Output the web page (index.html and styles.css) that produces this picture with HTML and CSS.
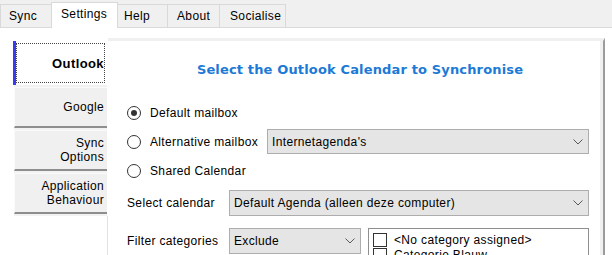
FILE: index.html
```html
<!DOCTYPE html>
<html>
<head>
<meta charset="utf-8">
<link rel="stylesheet" href="styles.css">
</head>
<body>
<div class="window">
  <div class="tabbar">
    <div class="tab tab-sync">Sync</div>
    <div class="tab tab-active tab-settings">Settings</div>
    <div class="tab tab-help">Help</div>
    <div class="tab tab-about">About</div>
    <div class="tab tab-social">Socialise</div>
  </div>
  <div class="main">
    <div class="vtabs">
      <div class="vtab-active"><div class="focus">Outlook</div></div>
      <div class="vtab-group">
        <div class="vtab">Google</div>
        <div class="vtab">Sync<br>Options</div>
        <div class="vtab">Application<br>Behaviour</div>
      </div>
      <div class="vtab-fill"></div>
    </div>
    <div class="panel">
      <div class="title">Select the Outlook Calendar to Synchronise</div>
      <div class="row row-first">
        <span class="radio checked"></span><span class="radio-label">Default mailbox</span>
      </div>
      <div class="row row-next">
        <span class="radio"></span><span class="radio-label radio-label-alt">Alternative mailbox</span>
        <div class="combo combo-grow"><span>Internetagenda's</span><svg class="chev" width="10" height="6" viewBox="0 0 10 6"><path d="M0.5 0.5 L5 5 L9.5 0.5" fill="none" stroke="#5a5a5a" stroke-width="1"/></svg></div>
      </div>
      <div class="row row-next">
        <span class="radio"></span><span class="radio-label">Shared Calendar</span>
      </div>
      <div class="row row-cal">
        <span class="field-label">Select calendar</span>
        <div class="combo combo-grow combo-tall"><span>Default Agenda (alleen deze computer)</span><svg class="chev" width="10" height="6" viewBox="0 0 10 6"><path d="M0.5 0.5 L5 5 L9.5 0.5" fill="none" stroke="#5a5a5a" stroke-width="1"/></svg></div>
      </div>
      <div class="row row-filter">
        <span class="field-label field-label-tall">Filter categories</span>
        <div class="combo combo-small combo-tall"><span>Exclude</span><svg class="chev" width="10" height="6" viewBox="0 0 10 6"><path d="M0.5 0.5 L5 5 L9.5 0.5" fill="none" stroke="#5a5a5a" stroke-width="1"/></svg></div>
        <div class="listbox">
          <div class="list-item"><span class="check"></span>&lt;No category assigned&gt;</div>
          <div class="list-item"><span class="check"></span>Categorie Blauw</div>
        </div>
      </div>
    </div>
  </div>
</div>
</body>
</html>
```
FILE: styles.css
```css
html, body {
  margin: 0;
  padding: 0;
  background: #ffffff;
}
body {
  font-family: "Liberation Sans", Arial, sans-serif;
  font-size: 12px;
  letter-spacing: 0.35px;
  color: #000000;
}
.window {
  width: 612px;
  height: 255px;
  overflow: hidden;
}
.tabbar {
  height: 27px;
  background: #f0f0f0;
  border-bottom: 1px solid #dadada;
  display: flex;
  align-items: flex-end;
}
.tab {
  box-sizing: border-box;
  height: 23px;
  border: 1px solid #d9d9d9;
  border-bottom: none;
  margin-right: -1px;
  display: flex;
  align-items: center;
  background: #f0f0f0;
}
.tab-active {
  position: relative;
  z-index: 1;
  height: 26px;
  margin-bottom: -1px;
  background: #ffffff;
  padding-bottom: 3px;
}
.tab-sync { width: 52px; padding-left: 8px; }
.tab-settings { width: 67px; padding-left: 9px; }
.tab-help { width: 51px; padding-left: 6px; }
.tab-about { width: 53px; padding-left: 9px; }
.tab-social { width: 67px; padding-left: 10px; }

.main {
  display: flex;
  height: 227px;
  box-sizing: border-box;
  padding: 10px 7px 0 12px;
}
.vtabs {
  width: 96px;
  flex: none;
  display: flex;
  flex-direction: column;
}
.vtab-active {
  box-sizing: border-box;
  margin-top: 3px;
  margin-left: 1px;
  height: 44px;
  background: #ffffff;
  border-left: 3px solid #3a3af2;
  padding: 2px 3px 2px 0;
}
.focus {
  box-sizing: border-box;
  height: 100%;
  border: 1px dotted #444444;
  display: flex;
  align-items: center;
  justify-content: flex-end;
  font-weight: bold;
  font-size: 13px;
  letter-spacing: 0.4px;
}
.vtab-group {
  margin-left: 2px;
  width: 93px;
  background: #f2f2f2;
  padding: 2px 0;
  display: flex;
  flex-direction: column;
  gap: 2px;
}
.vtab {
  box-sizing: border-box;
  height: 41px;
  background: #f0f0f0;
  border-top: 1px solid #fafafa;
  border-left: 1px solid #fafafa;
  border-bottom: 2px solid #8e8e8e;
  display: flex;
  flex-direction: column;
  justify-content: center;
  align-items: flex-end;
  text-align: right;
  padding-right: 3px;
  line-height: 14px;
}
.vtab-fill {
  flex: 1;
  width: 95px;
  border-right: 1px solid #e3e3e3;
}
.panel {
  flex: 1;
  box-sizing: border-box;
  border-top: 3px solid #f0f0f0;
  border-right: 2px solid #9c9c9c;
  box-shadow: inset -3px 0 0 #f0f0f0;
  padding-left: 19px;
  padding-right: 14px;
  display: flex;
  flex-direction: column;
}
.title {
  margin-top: 22px;
  margin-left: -10px;
  margin-right: -14px;
  line-height: 14px;
  text-align: center;
  font-family: "DejaVu Sans", Verdana, sans-serif;
  font-weight: bold;
  font-size: 13px;
  letter-spacing: 0.15px;
  color: #1c7ad6;
}
.row {
  display: flex;
  align-items: center;
  height: 25px;
  flex: none;
}
.row-first { margin-top: 23px; }
.row-next { margin-top: 4px; }
.row-cal { margin-top: 7px; height: 26px; }
.row-filter { margin-top: 12px; height: 40px; align-items: flex-start; }
.radio {
  box-sizing: border-box;
  width: 14px;
  height: 14px;
  border: 1px solid #333333;
  border-radius: 50%;
  background: #ffffff;
  margin-right: 9px;
  flex: none;
  display: flex;
  align-items: center;
  justify-content: center;
}
.radio.checked::after {
  content: "";
  width: 6px;
  height: 6px;
  border-radius: 50%;
  background: #333333;
}
.radio-label-alt {
  width: 117px;
  flex: none;
}
.combo {
  box-sizing: border-box;
  height: 25px;
  background: #e5e5e5;
  border: 1px solid #adadad;
  display: flex;
  align-items: center;
  padding-left: 4px;
  padding-right: 5px;
}
.combo-grow { flex: 1; }
.combo-tall { height: 26px; }
.combo-small { width: 132px; flex: none; }
.chev {
  margin-left: auto;
  flex: none;
}
.field-label {
  width: 102px;
  flex: none;
}
.field-label-tall {
  line-height: 26px;
}
.listbox {
  flex: 1;
  margin-left: 7px;
  box-sizing: border-box;
  height: 40px;
  background: #ffffff;
  border: 1px solid #8f8f8f;
  padding: 3px 4px 0 4px;
}
.list-item {
  display: flex;
  align-items: center;
  height: 15px;
}
.check {
  box-sizing: border-box;
  width: 14px;
  height: 14px;
  border: 1px solid #333333;
  background: #ffffff;
  margin-right: 7px;
  flex: none;
}
```
